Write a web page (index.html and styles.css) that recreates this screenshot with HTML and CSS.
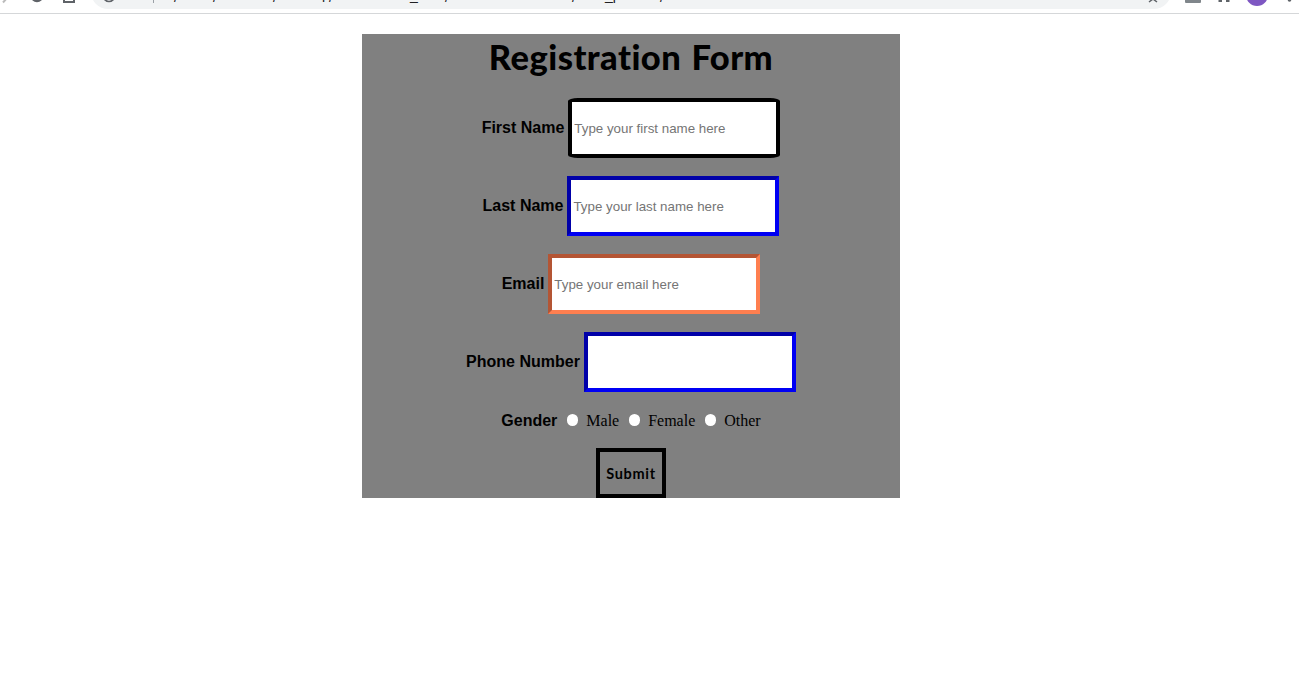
FILE: index.html
```html
<!DOCTYPE html>
<html lang="en">
<head>
<meta charset="utf-8">
<title>Registration Form</title>
<link rel="stylesheet" href="styles.css">
</head>
<body>
<header class="toolbar">
<svg class="toolbar-art" width="1299" height="14" viewBox="0 0 1299 14">
  <path d="M91 -8a17 17 0 0 0 17 17H1154a17 17 0 0 0 17-17z" fill="#f1f3f4"/>
  <path d="M3 2.500L7 -2" stroke="#bbb" stroke-width="2" fill="none"/>
  <circle cx="37" cy="-4" r="5" fill="none" stroke="#5f6368" stroke-width="2.500"/>
  <path d="M64 -4V2H74V-4" fill="none" stroke="#5f6368" stroke-width="2"/>
  <circle cx="109" cy="-4" r="5.500" fill="none" stroke="#5f6368" stroke-width="1.700"/>
  <path d="M153.500 0V3" stroke="#9aa0a6"/>
  <g class="address">
    <text x="174" y="2">/</text><text x="213" y="2">/</text><text x="273" y="2">/</text><text x="322" y="-1">p</text><text x="329" y="2">/</text>
    <text x="410" y="0">_</text><text x="445" y="2">/</text><text x="572" y="2">/</text><text x="605" y="0">_p</text><text x="660" y="2">/</text>
  </g>
  <path d="M1149 2L1153 -1L1157 2" fill="none" stroke="#5f6368" stroke-width="1.500"/>
  <rect x="1185" y="-8" width="16" height="11" rx="1" fill="#80868b"/>
  <path d="M1218.500 1H1222M1226 1H1229.500" stroke="#5f6368" stroke-width="2"/>
  <circle cx="1257" cy="-5" r="11" fill="#7e57c2"/>
  <circle cx="1289.500" cy="0" r="1.800" fill="#5f6368"/>
</svg>
</header>
<main class="form-panel">
  <h1 class="title">Registration Form</h1>
  <form>
    <div class="row"><label class="label" for="first">First Name</label> <input class="field field-first" id="first" type="text" placeholder="Type your first name here"></div>
    <div class="row"><label class="label" for="last">Last Name</label> <input class="field field-blue" id="last" type="text" placeholder="Type your last name here"></div>
    <div class="row"><label class="label" for="email">Email</label> <input class="field field-email" id="email" type="email" placeholder="Type your email here"></div>
    <div class="row"><label class="label" for="phone">Phone Number</label> <input class="field field-blue" id="phone" type="text"></div>
    <div class="gender"><span class="label">Gender</span>
      <label class="option"><span class="radio"></span>Male</label>
      <label class="option"><span class="radio"></span>Female</label>
      <label class="option"><span class="radio"></span>Other</label>
    </div>
    <button class="submit" type="button">Submit</button>
  </form>
</main>
</body>
</html>
```
FILE: styles.css
```css
body {
  margin: 0;
  background: #fff;
  font-family: "Liberation Serif", "Times New Roman", serif;
  font-size: 16px;
}
.toolbar {
  height: 13px;
  border-bottom: 1px solid #d5d7d9;
  overflow: hidden;
}
.toolbar-art { display: block; }
.address {
  font-family: "Liberation Sans", sans-serif;
  font-size: 14px;
  fill: #202124;
}
.form-panel {
  width: 538px;
  height: 464px;
  margin: 20px 0 0 362px;
  background: #808080;
  color: #000;
  text-align: center;
}
.title {
  margin: 0 0 18px;
  height: 46px;
  line-height: 45px;
  font-family: Lato, sans-serif;
  font-weight: 900;
  font-size: 34.5px;
  font-variant-ligatures: none;
  letter-spacing: 0.45px;
  word-spacing: 1.5px;
  white-space: nowrap;
}
.row {
  display: flex;
  justify-content: center;
  align-items: center;
  gap: 4px;
  height: 60px;
  margin-bottom: 18px;
}
.label {
  font: bold 16px "Liberation Sans", Arial, sans-serif;
}
.row .label { margin-top: -1px; }
.field {
  box-sizing: border-box;
  width: 212px;
  height: 60px;
  padding: 1px 2px;
  background: #fff;
  font: 13.333px "Liberation Sans", Arial, sans-serif;
}
.field::placeholder { color: #757575; }
.field-first { border: 4px solid #000; border-radius: 10px / 3px; }
.field-blue { border: 4px solid; border-color: #0000a8 #0000f4 #0000f4 #0000a8; }
.field-email { border: 4px solid; border-color: #b45534 #ff7f50 #ff7f50 #b45534; }
.gender {
  display: flex;
  justify-content: center;
  align-items: center;
  height: 20px;
  padding-top: 1px;
  margin-bottom: 17px;
}
.option { display: flex; align-items: center; margin-left: 9px; }
.radio {
  width: 11.500px;
  height: 11.500px;
  margin: -2px 8px 0 0.500px;
  border-radius: 50%;
  background: #fff;
}
.submit {
  box-sizing: border-box;
  width: 70px;
  height: 50px;
  padding: 0;
  border: 4px solid #000;
  background: transparent;
  color: #000;
  font: bold 14.5px Lato, sans-serif;
  letter-spacing: 0.7px;
}
```
